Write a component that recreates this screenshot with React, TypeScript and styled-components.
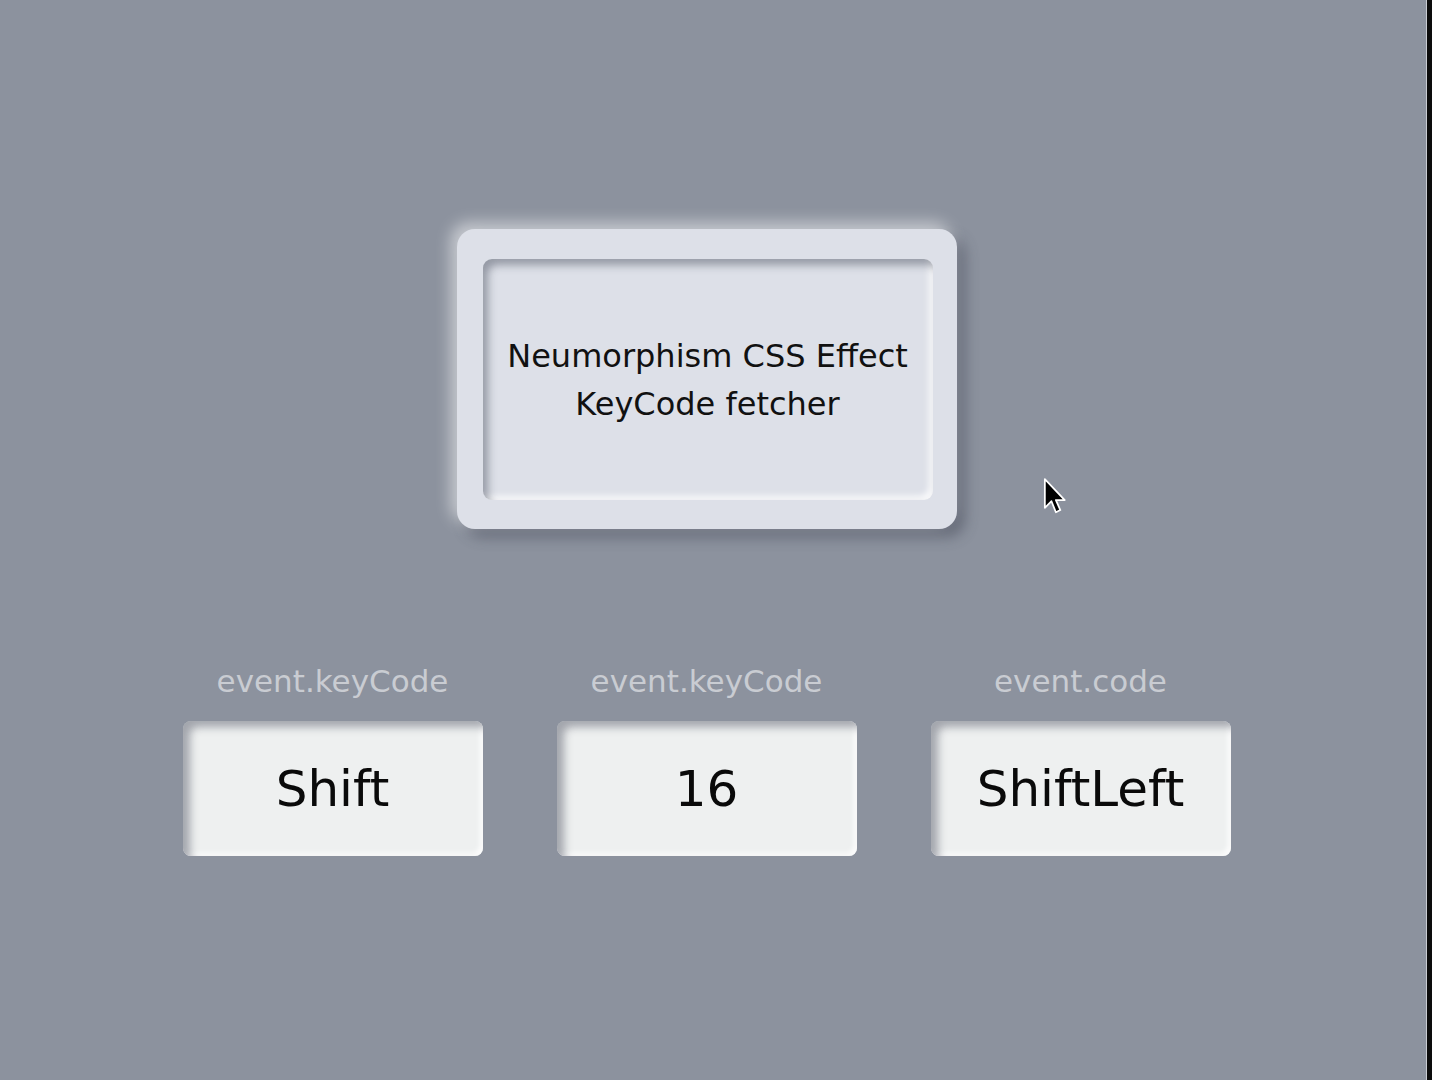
import React from 'react';
import styled, { createGlobalStyle } from 'styled-components';

const GlobalStyle = createGlobalStyle`
  html, body {
    margin: 0;
    padding: 0;
    background: #8c929e;
    font-family: 'DejaVu Sans', 'Noto Sans CJK JP', sans-serif;
  }
`;

const Page = styled.div`
  position: relative;
  display: flex;
  width: 1432px;
  height: 1080px;
  overflow: hidden;
  background: #8c929e;
`;

const Main = styled.main`
  flex: 1;
  display: flex;
  flex-direction: column;
  align-items: center;
  padding-top: 229px;
`;

const SideStrip = styled.div`
  width: 5px;
  margin-left: 13px;
  background: #0c0c0c;
  border-left: 1px solid #c9ccd2;
`;

const Card = styled.div`
  width: 500px;
  height: 300px;
  box-sizing: border-box;
  padding: 30px 24px 29px 26px;
  border-radius: 18px;
  background: #dde0e8;
  box-shadow: -6px -6px 16px rgba(255, 255, 255, 0.55),
    8px 8px 14px rgba(55, 60, 75, 0.45);
`;

const Screen = styled.div`
  height: 100%;
  display: flex;
  align-items: center;
  justify-content: center;
  border-radius: 9px;
  background: #dde0e8;
  box-shadow: inset 5px 6px 8px rgba(60, 66, 82, 0.45),
    inset -4px -4px 6px rgba(255, 255, 255, 0.85);
`;

const Title = styled.p`
  margin: 0;
  text-align: center;
  font-size: 32px;
  line-height: 48px;
  color: #111;
`;

const KeyRow = styled.div`
  display: flex;
  gap: 74px;
  margin-top: 134px;
`;

const KeyColumn = styled.div`
  display: flex;
  flex-direction: column;
  align-items: center;
`;

const KeyLabel = styled.div`
  font-size: 31px;
  line-height: 36px;
  color: #c9ccd2;
  margin-bottom: 22px;
`;

const KeyCap = styled.div`
  width: 300px;
  height: 135px;
  display: flex;
  align-items: center;
  justify-content: center;
  border-radius: 8px;
  background: #eef0f0;
  box-shadow: inset 7px 6px 9px rgba(70, 76, 90, 0.45),
    inset -3px -3px 5px rgba(255, 255, 255, 0.9);
  font-size: 50px;
  color: #0a0a0a;
`;

const Cursor = styled.svg`
  position: absolute;
  left: 1042px;
  top: 478px;
`;

const keys = [
  { label: 'event.keyCode', value: 'Shift' },
  { label: 'event.keyCode', value: '16' },
  { label: 'event.code', value: 'ShiftLeft' },
];

const App = () => {
  return (
    <Page>
      <GlobalStyle />
      <Main>
        <Card>
          <Screen>
            <Title>
              Neumorphism CSS Effect
              <br />
              KeyCode fetcher
            </Title>
          </Screen>
        </Card>
        <KeyRow>
          {keys.map((k, i) => (
            <KeyColumn key={i}>
              <KeyLabel>{k.label}</KeyLabel>
              <KeyCap>{k.value}</KeyCap>
            </KeyColumn>
          ))}
        </KeyRow>
      </Main>
      <SideStrip />
      <Cursor width="30" height="42" viewBox="0 0 26 38">
        <path
          d="M2 1 L2 27 L8 21 L12 31 L16 29 L12 20 L20 20 Z"
          fill="#000"
          stroke="#fff"
          strokeWidth="1.6"
          strokeLinejoin="round"
        />
      </Cursor>
    </Page>
  );
};

export default App;
